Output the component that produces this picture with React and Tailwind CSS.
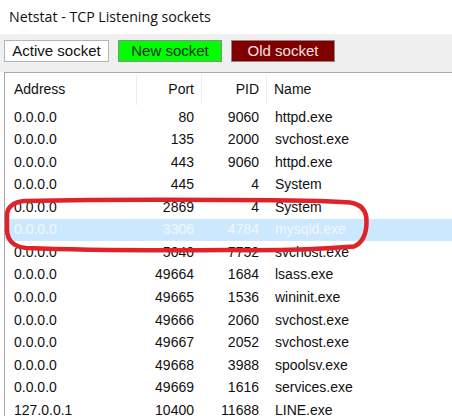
import React from "react";

const rows = [
  ["0.0.0.0", "80", "9060", "httpd.exe"],
  ["0.0.0.0", "135", "2000", "svchost.exe"],
  ["0.0.0.0", "443", "9060", "httpd.exe"],
  ["0.0.0.0", "445", "4", "System"],
  ["0.0.0.0", "2869", "4", "System"],
  ["0.0.0.0", "3306", "4784", "mysqld.exe"],
  ["0.0.0.0", "5040", "7752", "svchost.exe"],
  ["0.0.0.0", "49664", "1684", "lsass.exe"],
  ["0.0.0.0", "49665", "1536", "wininit.exe"],
  ["0.0.0.0", "49666", "2060", "svchost.exe"],
  ["0.0.0.0", "49667", "2052", "svchost.exe"],
  ["0.0.0.0", "49668", "3988", "spoolsv.exe"],
  ["0.0.0.0", "49669", "1616", "services.exe"],
  ["127.0.0.1", "10400", "11688", "LINE.exe"],
];

export default function App() {
  return (
    <div className="w-[452px] h-[416px] overflow-hidden bg-white relative" style={{ fontFamily: '"Liberation Sans", Arial, sans-serif' }}>
      <div className="h-[34px] flex items-center pl-[9px] text-[14.2px] text-[#111]" style={{ fontFamily: '"Open Sans", "Noto Sans", sans-serif' }}>
        Netstat - TCP Listening sockets
      </div>
      <div className="h-[38px] bg-[#f0f0f0] flex items-start pt-[6px] pl-[4px] gap-[9px]">
        <div className="w-[105px] h-[22px] bg-white border border-[#b4b4b4] flex items-center justify-center text-[15px] text-[#111]">Active socket</div>
        <div className="w-[104px] h-[22px] bg-[#00ff00] border border-[#8a8a8a] flex items-center justify-center text-[15px] text-[#0b300b]">New socket</div>
        <div className="w-[104px] h-[22px] bg-[#800000] border border-[#9a8080] flex items-center justify-center text-[15px] text-[#f5e0e0]">Old socket</div>
      </div>
      <div className="ml-[4px] border-t border-l border-[#a8a8a8] bg-white text-[14px] text-[#111]">
        <div className="h-[33px] flex items-center">
          <div className="w-[132px] pl-[9px] h-[30px] flex items-center border-r border-[#ececec]">Address</div>
          <div className="w-[65px] pr-[7px] h-[30px] flex items-center justify-end border-r border-[#ececec]">Port</div>
          <div className="w-[65px] pr-[7px] h-[30px] flex items-center justify-end border-r border-[#ececec]">PID</div>
          <div className="pl-[7px] h-[30px] flex items-center">Name</div>
        </div>
        {rows.map((r, i) => {
          const sel = i === 5;
          return (
            <div key={i} className={"h-[22.54px] flex items-center " + (sel ? "bg-[#cce8ff] text-[#f2f7fc]" : "")}>
              <div className="w-[132px] pl-[9px]">{r[0]}</div>
              <div className="w-[65px] pr-[8px] text-right">{r[1]}</div>
              <div className="w-[65px] pr-[8px] text-right">{r[2]}</div>
              <div className="pl-[8px]">{r[3]}</div>
            </div>
          );
        })}
      </div>
      <svg className="absolute left-0 top-0 pointer-events-none" width="452" height="416" viewBox="0 0 452 416">
        <path
          d="M 24 201 Q 120 199 230 200 Q 320 200 350 202.5 Q 367 205 366.5 222 Q 366.5 241 354 246.5 Q 300 251 230 250 Q 100 251 26 248 Q 7.5 246 7 230 L 7 215 Q 7.5 203 24 201 Z"
          fill="none"
          stroke="#e0222b"
          strokeWidth="4.5"
          strokeLinejoin="round"
        />
      </svg>
    </div>
  );
}
